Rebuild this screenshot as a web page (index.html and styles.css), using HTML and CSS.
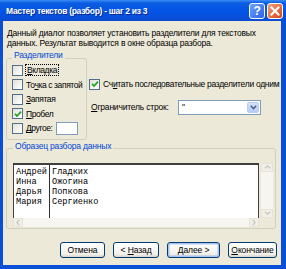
FILE: index.html
```html
<!DOCTYPE html>
<html lang="ru">
<head>
    <meta charset="UTF-8">
    <title>Мастер текстов (разбор) - шаг 2 из 3</title>
    <link rel="stylesheet" href="styles.css">
</head>
<body>

<div class="window">
    <!-- Заголовок окна -->
    <div class="titlebar">
        <span class="title">Мастер текстов (разбор) - шаг 2 из 3</span>
        <div class="title-buttons">
            <span class="tb-btn help">?</span>
            <span class="tb-btn close">
                <svg width="10" height="10" viewBox="0 0 10 10"><path d="M1.5 1.5 L8.5 8.5 M8.5 1.5 L1.5 8.5" stroke="#fff" stroke-width="2" stroke-linecap="square"/></svg>
            </span>
        </div>
    </div>

    <div class="frame">
        <p class="intro">Данный диалог позволяет установить разделители для текстовых<br>данных. Результат выводится в окне образца разбора.</p>

        <div class="middle">
            <!-- Разделители -->
            <fieldset class="group delims">
                <legend>Разделители</legend>
                <div class="rows">
                    <div class="check-row"><span class="box"></span><span class="focus"><u>В</u>кладка</span></div>
                    <div class="check-row"><span class="box"></span>То<u>ч</u>ка с запятой</div>
                    <div class="check-row"><span class="box"></span><u>З</u>апятая</div>
                    <div class="check-row"><span class="box"><svg width="8" height="8" viewBox="0 0 8 8"><path d="M1 3.8 L3 6 L7 1.6" fill="none" stroke="#21a121" stroke-width="1.7"/></svg></span><u>П</u>робел</div>
                    <div class="check-row"><span class="box"></span><u>Д</u>ругое:<span class="textbox"></span></div>
                </div>
            </fieldset>

            <div class="options">
                <div class="check-row tight"><span class="box"><svg width="8" height="8" viewBox="0 0 8 8"><path d="M1 3.8 L3 6 L7 1.6" fill="none" stroke="#21a121" stroke-width="1.7"/></svg></span>Сч<u>и</u>тать последовательные разделители одним</div>
                <div class="limiter">
                    <span class="limiter-label"><u>О</u>граничитель строк:</span>
                    <div class="combo">
                        <span class="combo-value">"</span>
                        <span class="combo-arrow">
                            <svg width="7" height="5" viewBox="0 0 7 5"><path d="M0.8 0.8 L3.5 3.6 L6.2 0.8" fill="none" stroke="#4d6185" stroke-width="1.5"/></svg>
                        </span>
                    </div>
                </div>
            </div>
        </div>

        <!-- Образец -->
        <fieldset class="group sample">
            <legend>Образец разбора данных</legend>
            <div class="preview">
                <div class="preview-main">
                    <div class="grid">
                        <div class="col first">Андрей<br>Инна<br>Дарья<br>Мария</div>
                        <div class="col">Гладких<br>Ожогина<br>Попкова<br>Сергиенко</div>
                    </div>
                    <div class="vscroll">
                        <span class="sb-btn"><svg width="7" height="4" viewBox="0 0 7 4"><path d="M0.8 3.2 L3.5 0.8 L6.2 3.2" fill="none" stroke="#c9c7ba" stroke-width="1.2"/></svg></span>
                        <span class="sb-btn"><svg width="7" height="4" viewBox="0 0 7 4"><path d="M0.8 0.8 L3.5 3.2 L6.2 0.8" fill="none" stroke="#c9c7ba" stroke-width="1.2"/></svg></span>
                    </div>
                </div>
                <div class="hscroll">
                    <span class="sb-btn"><svg width="4" height="7" viewBox="0 0 4 7"><path d="M3.2 0.8 L0.8 3.5 L3.2 6.2" fill="none" stroke="#c9c7ba" stroke-width="1.2"/></svg></span>
                    <span class="sb-btn"><svg width="4" height="7" viewBox="0 0 4 7"><path d="M0.8 0.8 L3.2 3.5 L0.8 6.2" fill="none" stroke="#c9c7ba" stroke-width="1.2"/></svg></span>
                </div>
            </div>
        </fieldset>

        <div class="buttons">
            <button class="btn w-cancel">Отмена</button>
            <button class="btn w-back">&lt; <u>Н</u>азад</button>
            <button class="btn w-next default"><u>Д</u>алее &gt;</button>
            <button class="btn w-finish"><u>О</u>кончание</button>
        </div>
    </div>
</div>

</body>
</html>
```

FILE: styles.css
```css
body {
    margin: 0;
    font-family: "Liberation Sans", Arial, sans-serif;
    font-size: 8.5px;
    letter-spacing: -0.2px;
    color: #000;
}

.window {
    width: 286px;
    height: 269px;
    display: flex;
    flex-direction: column;
    background-color: #ece9d8;
}

/* заголовок */
.titlebar {
    height: 21px;
    display: flex;
    align-items: center;
    padding: 0 3px 0 6px;
    background: linear-gradient(#3c8cf6 0, #0a5de2 3px, #0354e6 55%, #0a4bd0 100%);
}

.title {
    flex: 1;
    color: white;
    font-weight: bold;
    font-size: 8.5px;
    letter-spacing: -0.3px;
    text-shadow: 1px 1px 0 #0c2a8c;
    white-space: nowrap;
}

.title-buttons {
    display: flex;
    gap: 2px;
}

.tb-btn {
    width: 14px;
    height: 14px;
    border: 1px solid white;
    border-radius: 3px;
    display: flex;
    align-items: center;
    justify-content: center;
    color: white;
    font-weight: bold;
    font-size: 12px;
}

.tb-btn.help {
    background: linear-gradient(135deg, #6ea0fa, #2a64e6);
}

.tb-btn.close {
    background: linear-gradient(135deg, #f0a07c, #d6441a);
}

/* рамка окна */
.frame {
    flex: 1;
    display: flex;
    flex-direction: column;
    border: solid #0a4fd6;
    border-width: 0 5px 4px 3px;
}

.intro {
    margin: 7px 0 0 4px;
    line-height: 10px;
    white-space: nowrap;
}

.middle {
    display: flex;
    margin-top: 2px;
}

.group {
    margin: 0;
    padding: 0;
    min-width: 0;
    border: 1px solid #d0d0bf;
    border-radius: 3px;
}

.group legend {
    color: #0046d5;
    padding: 0 2px 6px;
    line-height: 10px;
}

.delims {
    margin-left: 3px;
    width: 81px;
    flex: none;
    box-sizing: border-box;
    padding: 0 0 3px 5px;
}

.delims .rows {
    margin-top: -3px;
    letter-spacing: -0.4px;
}

.check-row {
    display: flex;
    align-items: center;
    height: 14.5px;
    white-space: nowrap;
}

.check-row.tight {
    letter-spacing: -0.3px;
}

.box {
    width: 9px;
    height: 9px;
    flex: none;
    margin-right: 3px;
    border: 1px solid #52708e;
    background: linear-gradient(135deg, #e2e1d9, #fff);
    display: flex;
    align-items: center;
    justify-content: center;
}

.focus {
    outline: 1px dotted #000;
    padding: 0 1px;
}

.textbox {
    width: 20px;
    height: 11px;
    margin-left: 3px;
    border: 1px solid #7f9db9;
    background-color: white;
}

.options {
    margin-left: 2px;
    padding-top: 27px;
}

.limiter {
    display: flex;
    align-items: center;
    margin-top: 8px;
    padding-left: 2px;
}

.limiter-label {
    width: 87px;
    white-space: nowrap;
}

.combo {
    width: 83px;
    height: 15px;
    box-sizing: border-box;
    border: 1px solid #7f9db9;
    background-color: white;
    display: flex;
    align-items: center;
    padding: 1px;
}

.combo-value {
    flex: 1;
    padding-left: 2px;
    line-height: 11px;
}

.combo-arrow {
    width: 12px;
    height: 11px;
    border-radius: 2px;
    background: linear-gradient(#d4e0fb, #b6cbf7);
    border: 1px solid #bccdf3;
    box-sizing: border-box;
    display: flex;
    align-items: center;
    justify-content: center;
}

/* образец разбора */
.sample {
    margin: 1px 5px 0 3px;
    padding: 0 2px 1px 6px;
}

.preview {
    margin-top: 6px;
}

.preview-main {
    display: flex;
    height: 55px;
}

.grid {
    flex: 1;
    display: flex;
    background-color: white;
    border: 1px solid #404040;
    border-bottom: none;
    border-top-width: 2px;
    font-family: "Liberation Mono", "Courier New", monospace;
    font-size: 8.6px;
    letter-spacing: 0;
    line-height: 10.3px;
    padding-top: 2px;
}

.col {
    padding-left: 2px;
}

.col.first {
    width: 33px;
    border-right: 1px solid #303030;
    margin-top: -2px;
    padding-top: 2px;
}

.vscroll {
    width: 12px;
    margin-left: 2px;
    background-color: #f6f5f0;
    display: flex;
    flex-direction: column;
    justify-content: space-between;
}

.hscroll {
    height: 9px;
    margin-right: 14px;
    background-color: #f6f5f0;
    display: flex;
    justify-content: space-between;
}

.sb-btn {
    min-width: 10px;
    min-height: 9px;
    display: flex;
    align-items: center;
    justify-content: center;
    background-color: #f1efe7;
    border: 1px solid #e6e4da;
    box-sizing: border-box;
}

/* кнопки */
.buttons {
    display: flex;
    justify-content: flex-end;
    gap: 8px;
    margin-top: 13px;
    padding-right: 4px;
}

.btn {
    height: 16px;
    padding: 0;
    font-family: "Liberation Sans", Arial, sans-serif;
    font-size: 8.5px;
    letter-spacing: -0.1px;
    color: #000;
    border: 1px solid #003c74;
    border-radius: 3px;
    background: linear-gradient(#ffffff, #f1f0ea 80%, #d8d2c6);
}

.btn.default {
    box-shadow: inset 0 0 0 1.5px #a8c3f4;
}

.w-cancel { width: 45px; }
.w-back { width: 46px; }
.w-next { width: 53px; }
.w-finish { width: 49px; }
```
